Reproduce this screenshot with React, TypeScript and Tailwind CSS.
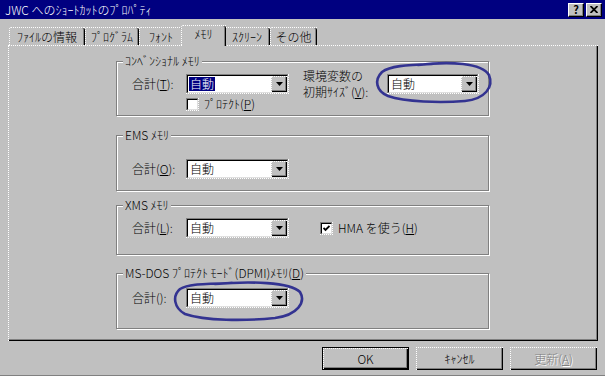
import type { ReactNode } from "react";

const TABS = [
  { label: "ﾌｧｲﾙの情報", w: "w-[76px]" },
  { label: "ﾌﾟﾛｸﾞﾗﾑ", w: "w-[54px]" },
  { label: "ﾌｫﾝﾄ", w: "w-[44px]" },
  { label: "ﾒﾓﾘ", w: "w-[45px]", active: true },
  { label: "ｽｸﾘｰﾝ", w: "w-[46px]" },
  { label: "その他", w: "w-[47px]" },
];

function Tab({ label, w, active }: { label: string; w: string; active?: boolean }) {
  if (active) {
    return (
      <div
        className={`${w} -mx-[2px] -mb-px h-[21px] relative z-10 bg-[#c0c0c0] border-t border-l border-dotted border-white rounded-tl-[2px]`}
      >
        <div className="h-full border-r border-black shadow-[inset_-1px_0_0_#808080] rounded-tr-[2px] flex justify-center pt-[1px]">
          {label}
        </div>
      </div>
    );
  }
  return (
    <div className={`${w} h-[18px] border-t border-l border-dotted border-white rounded-tl-[2px]`}>
      <div className="h-full border-r border-black shadow-[inset_-1px_0_0_#808080] rounded-tr-[2px] flex items-center justify-center">
        {label}
      </div>
    </div>
  );
}

function Combo({ w, selected }: { w: string; selected?: boolean }) {
  return (
    <div className={`${w} h-[20px] border-r border-b border-dotted border-white`}>
      <div className="h-full border-t border-l border-[#808080]">
        <div className="h-full flex bg-white border-t border-l border-r border-b border-t-black border-l-black border-r-[#dfdfdf] border-b-[#dfdfdf]">
          <div className="flex-1 flex items-center pl-[1px]">
            <span className={selected ? "bg-[#000080] text-white px-px" : "px-px"}>自動</span>
          </div>
          <div className="w-[16px] bg-[#c0c0c0] border-t border-l border-dotted border-white">
            <div className="h-full border-r border-b border-black shadow-[inset_-1px_-1px_0_#808080] flex items-center justify-center">
              <svg width="7" height="4" viewBox="0 0 7 4">
                <polygon points="0,0 7,0 3.5,4" fill="#000" />
              </svg>
            </div>
          </div>
        </div>
      </div>
    </div>
  );
}

function Check({ checked }: { checked?: boolean }) {
  return (
    <div className="w-[13px] h-[13px] border-r border-b border-dotted border-white">
      <div className="h-full border-t border-l border-[#808080]">
        <div className="h-full bg-white border-t border-l border-r border-b border-t-black border-l-black border-r-[#dfdfdf] border-b-[#dfdfdf] flex items-center justify-center">
          {checked && (
            <svg width="7" height="7" viewBox="0 0 7 7">
              <path d="M0.5 3 L2.5 5 L6.5 1" stroke="#000" strokeWidth="1.8" fill="none" />
            </svg>
          )}
        </div>
      </div>
    </div>
  );
}

function Group({ title, className, children }: { title: ReactNode; className: string; children: ReactNode }) {
  return (
    <div
      className={`w-[373px] border border-[#808080] shadow-[inset_1px_1px_0_#fff,1px_1px_0_#fff] ${className}`}
    >
      <div className="-mt-[8px] ml-[6px] w-fit px-[2px] bg-[#c0c0c0]">{title}</div>
      {children}
    </div>
  );
}

function Button({ children, primary, disabled }: { children: ReactNode; primary?: boolean; disabled?: boolean }) {
  return (
    <div className={`w-[87px] h-[23px] ${primary ? "border border-black" : ""}`}>
      <div className="h-full border-t border-l border-dotted border-white">
        <div className="h-full border-r border-b border-black shadow-[inset_-1px_-1px_0_#808080] flex items-center justify-center">
          <span className={disabled ? "text-[#808080] [text-shadow:1px_1px_0_#fff]" : ""}>{children}</span>
        </div>
      </div>
    </div>
  );
}

export default function App() {
  return (
    <div className="w-[605px] h-[376px] relative overflow-hidden bg-[#c0c0c0] border-b border-[#808080] text-black text-[12px] leading-[14px] font-light font-['Noto_Sans_CJK_JP',sans-serif]">
      {/* title bar */}
      <div className="h-[19px] bg-[#000080] flex items-center pl-[5px] pr-[3px] text-white">
        <span>JWC へのｼｮｰﾄｶｯﾄのﾌﾟﾛﾊﾟﾃｨ</span>
        <div className="ml-auto flex gap-[2px]">
          <div className="w-[16px] h-[14px] bg-[#c0c0c0] border-t border-l border-white border-r border-b border-r-black border-b-black shadow-[inset_-1px_-1px_0_#808080] flex items-center justify-center text-black font-bold text-[11px] leading-none">
            ?
          </div>
          <div className="w-[16px] h-[14px] bg-[#c0c0c0] border-t border-l border-white border-r border-b border-r-black border-b-black shadow-[inset_-1px_-1px_0_#808080] flex items-center justify-center">
            <svg width="8" height="7" viewBox="0 0 8 7">
              <path d="M0.5 0 L7.5 7 M7.5 0 L0.5 7" stroke="#000" strokeWidth="1.8" />
            </svg>
          </div>
        </div>
      </div>

      {/* tabs */}
      <div className="mt-[6px] h-[20px] pl-[9px] flex items-end">
        {TABS.map((t) => (
          <Tab key={t.label} {...t} />
        ))}
      </div>

      {/* tab panel */}
      <div className="ml-[8px] w-[590px] h-[296px] border-t border-l border-dotted border-white">
        <div className="h-full border-r border-b border-black shadow-[inset_-1px_-1px_0_#808080] pl-[107px] pt-[15px]">
          <Group title="ｺﾝﾍﾞﾝｼｮﾅﾙ ﾒﾓﾘ" className="h-[55px]">
            <div className="mt-[6px] h-[20px] pl-[15px] flex items-center">
              <span className="w-[54px]">
                合計(<u>T</u>):
              </span>
              <Combo w="w-[103px]" selected />
              <span className="ml-[14px] w-[84px] leading-[16px]">
                環境変数の
                <br />
                初期ｻｲｽﾞ(<u>V</u>):
              </span>
              <Combo w="w-[92px]" />
            </div>
            <div className="mt-[3px] pl-[69px] flex items-center">
              <Check />
              <span className="ml-[5px]">
                ﾌﾟﾛﾃｸﾄ(<u>P</u>)
              </span>
            </div>
          </Group>

          <Group title="EMS ﾒﾓﾘ" className="mt-[19px] h-[56px]">
            <div className="mt-[17px] h-[20px] pl-[15px] flex items-center">
              <span className="w-[54px]">
                合計(<u>O</u>):
              </span>
              <Combo w="w-[103px]" />
            </div>
          </Group>

          <Group title="XMS ﾒﾓﾘ" className="mt-[14px] h-[50px]">
            <div className="mt-[6px] h-[20px] pl-[15px] flex items-center">
              <span className="w-[54px]">
                合計(<u>L</u>):
              </span>
              <Combo w="w-[103px]" />
              <div className="ml-[31px]">
                <Check checked />
              </div>
              <span className="ml-[5px]">
                HMA を使う(<u>H</u>)
              </span>
            </div>
          </Group>

          <Group
            title={
              <>
                MS-DOS ﾌﾟﾛﾃｸﾄ ﾓｰﾄﾞ(DPMI)ﾒﾓﾘ(<u>D</u>)
              </>
            }
            className="mt-[18px] h-[56px]"
          >
            <div className="mt-[8px] h-[20px] pl-[15px] flex items-center">
              <span className="w-[54px]">合計():</span>
              <Combo w="w-[103px]" />
            </div>
          </Group>
        </div>
      </div>

      {/* buttons */}
      <div className="mt-[6px] ml-[8px] w-[590px] pr-[1px] flex justify-end gap-[7px]">
        <Button primary>OK</Button>
        <Button>ｷｬﾝｾﾙ</Button>
        <Button disabled>
          更新(<u>A</u>)
        </Button>
      </div>

      {/* marker scribbles over the screenshot */}
      <svg
        className="absolute top-0 left-0 pointer-events-none"
        width="605"
        height="376"
        viewBox="0 0 605 376"
      >
        <path
          d="M418 65 C450 61 482 63 489 75 C494 87 485 99 465 101 C440 103 405 102 388 96 C376 91 374 80 382 72 C390 66 405 65 432 64"
          stroke="#24248c"
          strokeWidth="2.6"
          fill="none"
          strokeLinecap="round"
          opacity="0.9"
        />
        <path
          d="M215 284 C250 281 290 282 300 292 C306 302 298 315 275 318 C245 321 205 321 185 314 C174 308 172 296 180 289 C188 284 200 284 232 283"
          stroke="#24248c"
          strokeWidth="2.6"
          fill="none"
          strokeLinecap="round"
          opacity="0.9"
        />
      </svg>
    </div>
  );
}
